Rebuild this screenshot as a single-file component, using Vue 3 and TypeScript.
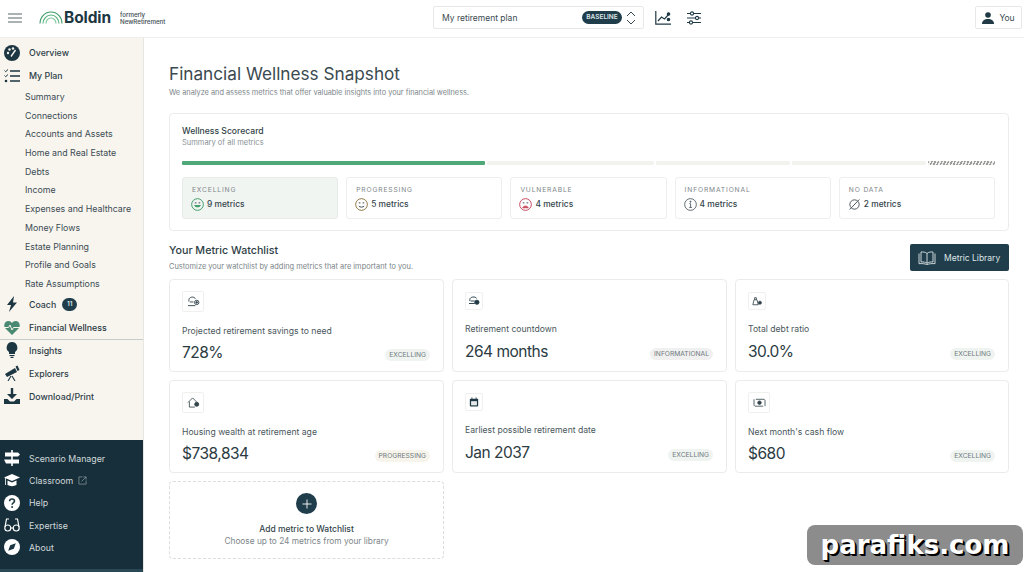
<script setup lang="ts">
const subItems: string[] = ['Summary','Connections','Accounts and Assets','Home and Real Estate','Debts','Income','Expenses and Healthcare','Money Flows','Estate Planning','Profile and Goals','Rate Assumptions']

interface Tile { label: string; count: string; face: string; active?: boolean }
const tiles: Tile[] = [
  { label: 'EXCELLING', count: '9 metrics', face: 'good', active: true },
  { label: 'PROGRESSING', count: '5 metrics', face: 'ok' },
  { label: 'VULNERABLE', count: '4 metrics', face: 'bad' },
  { label: 'INFORMATIONAL', count: '4 metrics', face: 'info' },
  { label: 'NO DATA', count: '2 metrics', face: 'none' },
]

interface Metric { label: string; value: string; chip: string; tone: string; icon: string; small?: boolean }
const metrics: Metric[] = [
  { label: 'Projected retirement savings to need', value: '728%', chip: 'EXCELLING', tone: 'green', icon: 'savings' },
  { label: 'Retirement countdown', value: '264 months', chip: 'INFORMATIONAL', tone: 'grey', icon: 'count', small: true },
  { label: 'Total debt ratio', value: '30.0%', chip: 'EXCELLING', tone: 'green', icon: 'debt', small: true },
  { label: 'Housing wealth at retirement age', value: '$738,834', chip: 'PROGRESSING', tone: 'sand', icon: 'house' },
  { label: 'Earliest possible retirement date', value: 'Jan 2037', chip: 'EXCELLING', tone: 'green', icon: 'cal', small: true },
  { label: "Next month's cash flow", value: '$680', chip: 'EXCELLING', tone: 'green', icon: 'cash' },
]
</script>

<template>
  <div class="page">
    <header class="topbar">
      <div class="brand">
        <svg class="burger" viewBox="0 0 14 10" width="14" height="10"><path d="M0 1h14M0 5h14M0 9h14" stroke="#59666b" stroke-width="1.2" fill="none"/></svg>
        <svg class="arches" viewBox="0 0 24 13" width="24" height="13" fill="none" stroke-width="1.1">
          <path d="M1 12.5C1 6 6 1 12 1s11 5 11 11.5" stroke="#3f9b68"/>
          <path d="M4 12.5C4 8 7.6 4 12 4s8 4 8 8.5" stroke="#4fae78"/>
          <path d="M7 12.5C7 9.6 9.2 7 12 7s5 2.6 5 5.5" stroke="#7cc39a"/>
        </svg>
        <span class="wordmark">Boldin</span>
        <span class="formerly">formerly<br />NewRetirement</span>
      </div>
      <div class="plan">
        <span class="plan-name">My retirement plan</span>
        <span class="baseline">BASELINE</span>
        <svg viewBox="0 0 10 14" width="10" height="14" fill="none" stroke="#3b4a50" stroke-width="1"><path d="M1 5l4-4 4 4M1 9l4 4 4-4"/></svg>
      </div>
      <svg class="tool first" viewBox="0 0 16 14" width="16" height="14" fill="none" stroke="#1f3a45" stroke-width="1.2"><path d="M.8 0v13.2H16"/><path d="M3 10l3.5-4 3 2L14 3"/><circle cx="13.5" cy="3" r="1.2" fill="#1f3a45"/><circle cx="13.5" cy="8.5" r="1.2" fill="#1f3a45"/></svg>
      <svg class="tool" viewBox="0 0 16 14" width="16" height="14" fill="none" stroke="#1f3a45" stroke-width="1.1"><path d="M1 2.500h14M1 7h14M1 11.500h14"/><circle cx="6" cy="2.500" r="1.600" fill="#fff"/><circle cx="11" cy="7" r="1.600" fill="#fff"/><circle cx="5" cy="11.500" r="1.600" fill="#fff"/></svg>
      <div class="you">
        <svg viewBox="0 0 12 12" width="12" height="12" fill="#1f3a45"><circle cx="6" cy="3" r="2.800"/><path d="M0 12c0-3.500 2.500-5 6-5s6 1.500 6 5z"/></svg>
        <span>You</span>
      </div>
    </header>

    <div class="body">
      <aside class="sidebar">
        <nav class="nav">
          <div class="item">
            <svg class="ico" viewBox="0 0 16 16"><circle cx="8" cy="8" r="8" fill="#1c3642"/><circle cx="4" cy="8" r="1.200" fill="#f8f5ef"/><circle cx="5.500" cy="4.500" r="1.200" fill="#f8f5ef"/><circle cx="9" cy="3.500" r="1.200" fill="#f8f5ef"/><path d="M7 11.500L11.500 5" stroke="#f8f5ef" stroke-width="1.400"/></svg>
            <span>Overview</span>
          </div>
          <div class="item">
            <svg class="ico" viewBox="0 0 16 14"><path d="M6 2h10M6 7h10M6 12h10" stroke="#1c3642" stroke-width="1.500"/><path d="M.5 1.500l1.200 1.200L4 .5M.5 6.500l1.200 1.200L4 5.500" stroke="#1c3642" stroke-width="1" fill="none"/><circle cx="2" cy="12" r="1.300" fill="#1c3642"/></svg>
            <span>My Plan</span>
          </div>
          <div class="subs">
            <div v-for="s in subItems" :key="s" class="sub">{{ s }}</div>
          </div>
          <div class="item coach">
            <svg class="ico" viewBox="0 0 16 16"><path d="M10 0L3 9h4l-2 7 8-9.500H9z" fill="#1c3642"/></svg>
            <span>Coach</span>
            <b class="count">11</b>
          </div>
          <div class="item current">
            <svg class="ico" viewBox="0 0 16 14"><path d="M8 14L1 7C-1 4 1 0 4.500 0 6 0 7.200.8 8 2c.8-1.200 2-2 3.500-2C15 0 17 4 15 7z" fill="#4a8a72"/><path d="M0 6.500h4.500l1.500-2.500 2 5 1.500-2.500H16" stroke="#f8f5ef" stroke-width="1" fill="none"/></svg>
            <span>Financial Wellness</span>
          </div>
          <div class="item">
            <svg class="ico" viewBox="0 0 16 16"><path d="M8 0a5.500 5.500 0 0 0-3 10v2h6v-2A5.500 5.500 0 0 0 8 0z" fill="#1c3642"/><path d="M5.500 13.500h5M6.500 15.300h3" stroke="#1c3642" stroke-width="1.200"/></svg>
            <span>Insights</span>
          </div>
          <div class="item">
            <svg class="ico" viewBox="0 0 16 16"><path d="M1 9l10-6 2 4-10 5z" fill="#1c3642"/><path d="M11.500 1.500l2-1 2 4.500-2 1z" fill="#1c3642"/><path d="M7 11l-3 5M8 11l3 5" stroke="#1c3642" stroke-width="1.100"/></svg>
            <span>Explorers</span>
          </div>
          <div class="item">
            <svg class="ico" viewBox="0 0 16 16"><path d="M6.800 0h2.400v6H13L8 11 3 6h3.800z" fill="#1c3642"/><path d="M0 11h3.500L6 13.500h4L12.500 11H16v5H0z" fill="#1c3642"/></svg>
            <span>Download/Print</span>
          </div>
        </nav>
        <div class="dark">
          <div class="ditem">
            <svg class="ico" viewBox="0 0 16 16" fill="#fff"><path d="M7.200 0h1.600v16H7.200z"/><path d="M1 2.500h13L16 4.500 14 6.500H1z"/><path d="M0 9.500h15v4H2z" /></svg>
            <span>Scenario Manager</span>
          </div>
          <div class="ditem">
            <svg class="ico" viewBox="0 0 16 14" fill="#fff"><path d="M8 1l8 3.500L8 8 0 4.500z"/><path d="M3.500 7.500L8 9.500l4.500-2V12c-2.500 1.500-6.500 1.500-9 0z"/><path d="M1.500 5v7" stroke="#fff" stroke-width=".8"/></svg>
            <span>Classroom</span>
            <svg class="ext" viewBox="0 0 10 10" width="9" height="9" fill="none" stroke="#8d9ca2" stroke-width=".8"><path d="M5 1H1v8h8V5M4 6l5-5M6 1h3v3"/></svg>
          </div>
          <div class="ditem">
            <svg class="ico" viewBox="0 0 16 16"><circle cx="8" cy="8" r="8" fill="#fff"/><path d="M5.600 6.200C5.700 4.600 6.800 4 8 4s2.500.8 2.500 2.100c0 1.800-2.400 1.800-2.400 3.600" fill="none" stroke="#1c3642" stroke-width="1.600"/><circle cx="8.100" cy="12" r="1" fill="#1c3642"/></svg>
            <span>Help</span>
          </div>
          <div class="ditem">
            <svg class="ico" viewBox="0 0 16 14" fill="none" stroke="#fff" stroke-width="1.200"><circle cx="3.800" cy="10" r="3"/><circle cx="12.200" cy="10" r="3"/><path d="M6.800 10h2.400M1 9l1.500-8H5M15 9l-1.500-8H11"/></svg>
            <span>Expertise</span>
          </div>
          <div class="ditem">
            <svg class="ico" viewBox="0 0 16 16"><circle cx="8" cy="8" r="8" fill="#fff"/><path d="M11.800 4.200L9.800 9.800 4.200 11.800 6.200 6.200z" fill="#1c3642"/></svg>
            <span>About</span>
          </div>
        </div>
        <div class="strip"></div>
      </aside>

      <main class="main">
        <h1>Financial Wellness Snapshot</h1>
        <p class="lead">We analyze and assess metrics that offer valuable insights into your financial wellness.</p>

        <section class="score">
          <div class="score-title">Wellness Scorecard</div>
          <div class="score-sub">Summary of all metrics</div>
          <div class="bar">
            <i class="seg green"></i>
            <i class="seg pale a"></i>
            <i class="seg pale b"></i>
            <i class="seg pale b"></i>
            <i class="seg hatch"></i>
          </div>
          <div class="tiles">
            <div v-for="t in tiles" :key="t.label" class="tile" :class="{ active: t.active }">
              <div class="tile-label">{{ t.label }}</div>
              <div class="tile-count">
                <svg v-if="t.face === 'good'" viewBox="0 0 12 12" width="13" height="13" fill="none" stroke="#3f9b68" stroke-width=".9"><circle cx="6" cy="6" r="5.400"/><path d="M3.300 7c.6 1.600 4.800 1.600 5.400 0z" fill="#3f9b68"/><path d="M3.500 4.500h1.500M7 4.500h1.500" stroke="#3b4a50"/></svg>
                <svg v-else-if="t.face === 'ok'" viewBox="0 0 12 12" width="13" height="13" fill="none" stroke="#8d7440" stroke-width=".9"><circle cx="6" cy="6" r="5.400"/><path d="M3.500 7.500c1 1.200 4 1.200 5 0" stroke="#3b4a50"/><path d="M3.500 4.500h1.500M7 4.500h1.500" stroke="#3b4a50"/></svg>
                <svg v-else-if="t.face === 'bad'" viewBox="0 0 12 12" width="13" height="13" fill="none" stroke="#c8465a" stroke-width=".9"><circle cx="6" cy="6" r="5.400"/><path d="M3.500 9c.6-2 4.400-2 5 0z" fill="#c8465a"/><path d="M3.500 4.500h1.500M7 4.500h1.500" stroke="#3b4a50"/></svg>
                <svg v-else-if="t.face === 'info'" viewBox="0 0 12 12" width="13" height="13" fill="none" stroke="#4a565b" stroke-width=".8"><circle cx="6" cy="6" r="5.400"/><path d="M5 5.200h1.100v3.400M4.800 8.700h2.500"/><circle cx="6" cy="3.400" r=".5" fill="#4a565b"/></svg>
                <svg v-else viewBox="0 0 12 12" width="13" height="13" fill="none" stroke="#4a565b" stroke-width=".9"><circle cx="6" cy="6" r="4.300"/><path d="M1.500 10.700L10.500 1.300"/></svg>
                <span>{{ t.count }}</span>
              </div>
            </div>
          </div>
        </section>

        <div class="watch-head">
          <div>
            <h2>Your Metric Watchlist</h2>
            <p class="watch-sub">Customize your watchlist by adding metrics that are important to you.</p>
          </div>
          <button class="library" type="button">
            <svg viewBox="0 0 18 14" width="18" height="14" fill="none" stroke="#dfe6e8" stroke-width=".9"><path d="M9 2.500C7.500 1 5 .8 3 1v10c2 -.2 4.500 0 6 1.300 1.500-1.300 4-1.500 6-1.300V1c-2-.2-4.500 0-6 1.500zM9 2.500v9.800"/><path d="M1 2.500v10.200c3-.3 5.500 0 8 .8 2.500-.8 5-1.100 8-.8V2.500"/></svg>
            <span>Metric Library</span>
          </button>
        </div>

        <div class="grid">
          <article v-for="m in metrics" :key="m.label" class="card">
            <div class="icon-box" :class="{ small: m.small }">
              <svg v-if="m.icon === 'savings'" viewBox="0 0 14 12" width="13" height="11" fill="none" stroke="#33444b" stroke-width="1"><path d="M2 6V4c0-3 6-4 7-1M1 10.500h8M3 6.500h4"/><circle cx="10.500" cy="7" r="2.400"/><circle cx="10.500" cy="7" r=".9" fill="#33444b"/></svg>
              <svg v-else-if="m.icon === 'count'" viewBox="0 0 14 12" width="12" height="10" fill="none" stroke="#1f3a45" stroke-width="1.100"><path d="M2 6V4c0-3 7-4 8-1M1 9h7M3 6h5"/><circle cx="10.500" cy="7.500" r="2.500" fill="#1f3a45"/></svg>
              <svg v-else-if="m.icon === 'debt'" viewBox="0 0 12 12" width="10" height="10" fill="none" stroke="#33444b" stroke-width="1"><path d="M1 10.500l1.500-6h3.500l1.500 6zM3.200 4.500V2h2v2.500"/><circle cx="9.500" cy="8" r="1.800" fill="#33444b"/></svg>
              <svg v-else-if="m.icon === 'house'" viewBox="0 0 14 12" width="13" height="11" fill="none" stroke="#33444b" stroke-width=".9"><path d="M1 6l5-5 5 5M2.500 5v6h6"/><circle cx="10.500" cy="8" r="2.200" fill="#33444b"/></svg>
              <svg v-else-if="m.icon === 'cal'" viewBox="0 0 12 12" width="10" height="10"><rect x="1" y="2" width="10" height="9.500" rx="1" fill="#1f3a45"/><rect x="2.500" y="5" width="7" height="5" fill="#e6eaeb"/><path d="M3.500 .5v2.500M8.500 .5v2.500" stroke="#1f3a45"/></svg>
              <svg v-else viewBox="0 0 14 12" width="13" height="11" fill="none" stroke="#33444b" stroke-width=".9"><path d="M3 2.500h9l1 1v6.500M11 10H2L1 9V2.500"/><circle cx="7" cy="6.200" r="1.900" fill="#33444b"/></svg>
            </div>
            <div class="card-label" :class="{ tight: m.small }">{{ m.label }}</div>
            <div class="card-row">
              <span class="value">{{ m.value }}</span>
              <span class="chip" :class="m.tone">{{ m.chip }}</span>
            </div>
          </article>
          <article class="add">
            <span class="plus"><svg viewBox="0 0 10 10" width="10" height="10"><path d="M5 .5v9M.5 5h9" stroke="#fff" stroke-width=".9"/></svg></span>
            <strong>Add metric to Watchlist</strong>
            <span class="add-sub">Choose up to 24 metrics from your library</span>
          </article>
        </div>
      </main>
    </div>

    <div class="watermark">parafiks.com</div>
  </div>
</template>

<style>
html, body { margin: 0; padding: 0; background: #fff; }
</style>

<style scoped>
.page { position: relative; width: 1024px; height: 572px; overflow: hidden; display: flex; flex-direction: column; background: #fff; color: #26363d; font-family: Inter, "Liberation Sans", sans-serif; }
.topbar { flex: 0 0 38px; box-sizing: border-box; height: 38px; padding-bottom: 2px; display: flex; align-items: center; border-bottom: 1px solid #eeeeec; }
.brand { width: 433px; flex: none; display: flex; align-items: center; }
.burger { margin-left: 8px; }
.arches { margin-left: 17px; margin-top: -1px; }
.wordmark { margin-left: 1px; font-size: 15.500px; font-weight: 700; color: #1c3642; letter-spacing: -.1px; width: 47px; }
.formerly { margin-left: 9px; font-size: 6.200px; line-height: 7px; color: #3b4a50; font-weight: 500; }
.plan { width: 211px; height: 23px; box-sizing: border-box; border: 1px solid #e8e8e6; border-radius: 2px; display: flex; align-items: center; padding: 0 7px 0 8px; flex: none; }
.plan-name { flex: 1; font-size: 8.500px; color: #3b4a50; }
.baseline { background: #1f3d4a; color: #dfe6e8; font-size: 6.500px; font-weight: 600; height: 13px; line-height: 13px; width: 40px; text-align: center; border-radius: 7px; margin-right: 4px; }
.tool { flex: none; }
.tool.first { margin-left: 11px; }
.tool + .tool { margin-left: 15px; }
.you { margin-left: auto; margin-right: 2px; width: 47px; height: 23px; box-sizing: border-box; border: 1px solid #e8e8e6; border-radius: 2px; display: flex; align-items: center; justify-content: center; gap: 5px; font-size: 8.500px; color: #3b4a50; }
.you svg { flex: none; }

.body { flex: 1; display: flex; min-height: 0; }
.sidebar { width: 144px; flex: none; box-sizing: border-box; background: #f8f5ef; border-right: 1px solid #e6e6e2; display: flex; flex-direction: column; }
.nav { flex: 1; padding-top: 3px; font-size: 8.800px; font-weight: 500; }
.item { height: 23px; display: flex; align-items: center; padding-left: 4px; color: #2e4047; }
.ico { width: 16px; height: 16px; flex: none; margin-right: 9px; }
.subs { padding: 0 0 0 25px; font-weight: 400; margin-top: 1px; }
.sub { height: 18.700px; line-height: 18.700px; color: #3b4c53; }
.coach { height: 21px; }
.count { margin-left: 6px; width: 15px; height: 13px; line-height: 13px; border-radius: 7px; background: #1f3d4a; color: #dfe6e8; font-size: 6.500px; text-align: center; font-weight: 600; }
.current { height: 22px; margin-top: 2px; margin-bottom: -1px; border-bottom: 1px solid #c6ccca; box-sizing: content-box; color: #26363d; }
.dark { flex: 0 0 129px; background: #172f3a; padding-top: 7px; box-sizing: border-box; color: #d0d8db; font-size: 8.800px; }
.ditem { height: 22.300px; display: flex; align-items: center; padding-left: 4px; }
.ext { margin-left: 5px; }
.strip { flex: 0 0 3px; background: #284955; }

.main { flex: 1; min-width: 0; padding: 25px 15px 0 25px; box-sizing: border-box; }
h1 { margin: 0; font-size: 17.200px; line-height: 22px; font-weight: 400; color: #3a4a50; }
.lead { margin: 2px 0 0; font-size: 7.330px; line-height: 11px; color: #7c8589; }
.score { margin-top: 15px; box-sizing: border-box; height: 118px; border: 1px solid #ececea; border-radius: 4px; padding: 11px 13px 0 12px; }
.score-title { font-size: 8.600px; line-height: 12px; color: #303f46; font-weight: 500; }
.score-sub { font-size: 7.500px; line-height: 11px; color: #8a9296; margin-top: 0; }
.bar { display: flex; gap: 2px; height: 4px; margin-top: 13px; }
.seg { display: block; height: 4px; border-radius: 1px; }
.seg.green { flex: 0 0 303px; background: #4fa877; }
.seg.pale { background: #f2f2ee; }
.seg.a { flex: 0 0 167px; }
.seg.b { flex: 0 0 134px; }
.seg.hatch { flex: 1; background: repeating-linear-gradient(115deg, #9a9d9b 0 1.500px, #f0f0ec 1.500px 3px); }
.tiles { display: flex; gap: 8px; margin-top: 12px; }
.tile { flex: 1; height: 42px; box-sizing: border-box; border: 1px solid #eeeeec; border-radius: 3px; padding: 8px 9px 0; }
.tile.active { background: #f1f5f2; border-color: #e6ebe7; }
.tile-label { font-size: 6.700px; line-height: 9px; letter-spacing: .85px; color: #7d8689; }
.tile-count { display: flex; align-items: center; gap: 3px; margin: 3px 0 0 -1px; font-size: 8.400px; line-height: 13px; font-weight: 500; color: #33444b; }
.tile-count svg { flex: none; }

.watch-head { display: flex; justify-content: space-between; align-items: flex-start; margin-top: 13px; height: 35px; }
h2 { margin: 0; padding-top: 0; font-size: 10.700px; line-height: 13px; font-weight: 500; color: #2e3e45; }
.watch-sub { margin: 5px 0 0; font-size: 7.450px; line-height: 10px; color: #7c8589; }
.library { width: 99px; height: 27px; border: 0; border-radius: 2px; background: #1f3d4a; color: #dfe6e8; font: 8.500px Inter, "Liberation Sans", sans-serif; display: flex; align-items: center; gap: 8px; padding: 0 0 0 8px; }
.library svg { flex: none; }
.grid { display: grid; grid-template-columns: 275px 275px 274px; grid-auto-rows: 93px; gap: 8px; }
.card { box-sizing: border-box; border: 1px solid #ebebe9; border-radius: 4px; padding: 11px 13px 0 12px; position: relative; }
.icon-box { width: 22px; height: 21px; box-sizing: border-box; border: 1px solid #f0f0ee; border-radius: 2px; display: flex; align-items: center; justify-content: center; }
.icon-box.small { width: 18px; height: 18px; margin-top: 1px; }
.card-label { margin-top: 13px; font-size: 8.650px; line-height: 12px; color: #4a575c; }
.card-label.tight { margin-top: 13px; }
.card-row { display: flex; align-items: center; justify-content: space-between; margin-top: 6px; }
.card-label.tight + .card-row { margin-top: 7px; }
.value { font-size: 15.500px; line-height: 20px; letter-spacing: -.5px; color: #2b3b42; }
.chip { height: 12px; line-height: 12px; padding: 0 4px; border-radius: 6px; font-size: 6.700px; color: #6e7a7e; margin-top: 3px; }
.chip.green { background: #f0f4f1; }
.chip.grey { background: #f0f0f0; }
.chip.sand { background: #f7f4ec; }
.add { height: 78px; box-sizing: border-box; border: 1px dashed #dcdcda; border-radius: 4px; display: flex; flex-direction: column; align-items: center; padding-top: 11px; }
.plus { width: 21px; height: 21px; border-radius: 50%; background: #1f3d4a; display: flex; align-items: center; justify-content: center; }
.add strong { margin-top: 9px; font-size: 8.500px; line-height: 12px; font-weight: 500; color: #33444b; }
.add-sub { margin-top: 0; font-size: 8.300px; line-height: 12px; color: #7c8589; }
.watermark { position: absolute; left: 807px; top: 525px; width: 216px; height: 40px; background: #8c8c8c; border-radius: 8px; color: #fff; font: 700 26px/40px "DejaVu Sans", sans-serif; text-align: center; text-shadow: 1px 1px 0 #000, 2px 2px 0 #000; }
</style>
